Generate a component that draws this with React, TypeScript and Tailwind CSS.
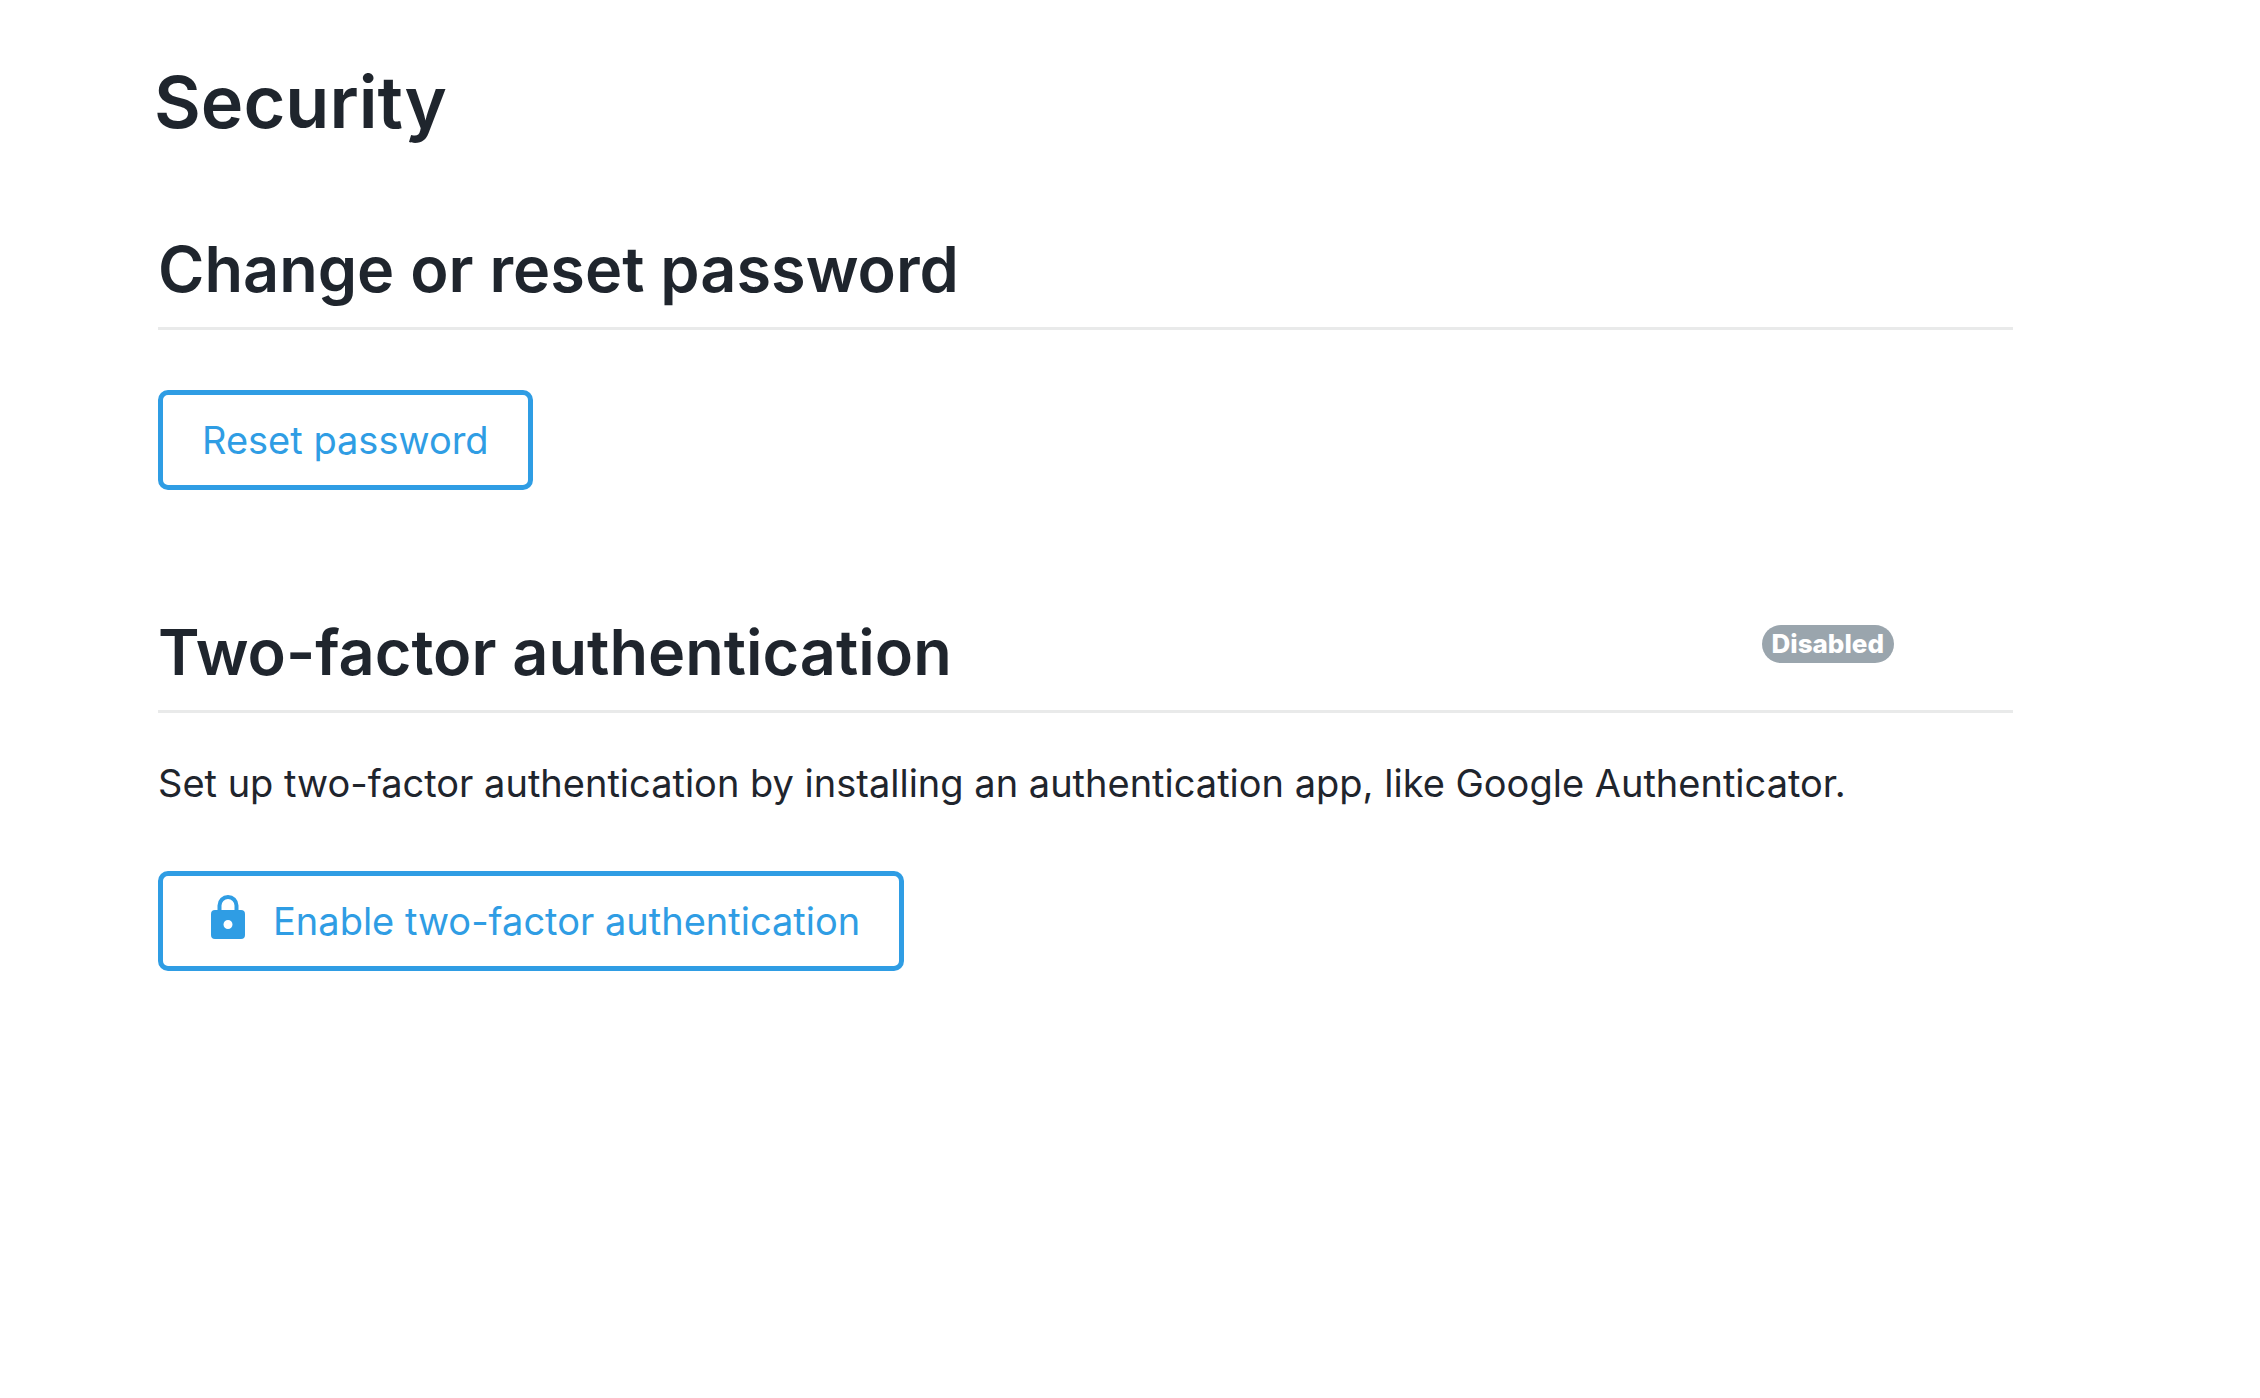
import type { ReactNode } from 'react'

interface SectionProps {
  title: string
  badge?: string
  children: ReactNode
}

function Section({ title, badge, children }: SectionProps) {
  return (
    <section>
      <div className="flex items-start justify-between border-b-3 border-[#e9eaea] pb-4 pr-[119px]">
        <h2 className="text-[63px] leading-[84px] font-semibold">{title}</h2>
        {badge && (
          <span className="mt-[15px] rounded-full bg-[#9aa5ad] px-[10px] text-[26px] leading-[38px] font-extrabold text-white">
            {badge}
          </span>
        )}
      </div>
      {children}
    </section>
  )
}

interface OutlineButtonProps {
  icon?: ReactNode
  children: ReactNode
}

function OutlineButton({ icon, children }: OutlineButtonProps) {
  return (
    <button
      type="button"
      className="flex items-center rounded-[10px] border-5 border-[#2f9de4] px-[39px] py-[23px] text-[38px] leading-[44px] text-[#2f9de4]"
    >
      {icon}
      {children}
    </button>
  )
}

function LockIcon() {
  return (
    <svg viewBox="0 0 34 44" className="-mt-2 mr-7 ml-[9px] h-11 w-[34px]" aria-hidden="true">
      <path d="M8.5 17v-6.500a8.500 8.500 0 0 1 17 0V17" fill="none" stroke="currentColor" strokeWidth="4" />
      <path
        fill="currentColor"
        fillRule="evenodd"
        d="M4 15h26a4 4 0 0 1 4 4v21a4 4 0 0 1-4 4H4a4 4 0 0 1-4-4V19a4 4 0 0 1 4-4Zm13 10a4.500 4.500 0 1 0 0 9 4.500 4.500 0 0 0 0-9Z"
      />
    </svg>
  )
}

export default function App() {
  return (
    <main className="min-h-screen bg-white pt-[52px] pr-[247px] pl-[158px] font-['Inter',sans-serif] text-[#1f252d]">
      <h1 className="-ml-1 text-[72px] leading-[100px] font-semibold">Security</h1>

      <div className="mt-[75px] flex flex-col gap-[120px]">
        <Section title="Change or reset password">
          <div className="mt-[60px] flex">
            <OutlineButton>Reset password</OutlineButton>
          </div>
        </Section>

        <Section title="Two-factor authentication" badge="Disabled">
          <p className="mt-[42px] text-[38px] leading-[56px]">
            Set up two-factor authentication by installing an authentication app, like Google Authenticator.
          </p>
          <div className="mt-[60px] flex">
            <OutlineButton icon={<LockIcon />}>Enable two-factor authentication</OutlineButton>
          </div>
        </Section>
      </div>
    </main>
  )
}
